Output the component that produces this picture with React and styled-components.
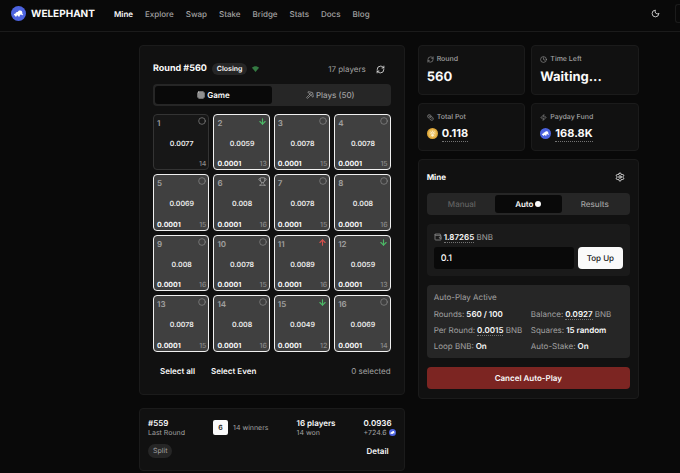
import { useState } from 'react';
import styled, { createGlobalStyle, ThemeProvider } from 'styled-components';
import {
	ArrowDown,
	ArrowUp,
	Circle,
	Clock,
	Coins,
	Grid3x3,
	Moon,
	Pickaxe,
	RefreshCw,
	Settings,
	Trophy,
	Wallet,
	Zap,
} from 'lucide-react';

const theme = {
	page: '#090909',
	card: '#111111',
	line: '#1b1b1b',
	muted: '#262626',
	tile: '#404040',
	white: '#fafafa',
	grey: '#a1a1a1',
	dim: '#737373',
	red: '#7c2522',
	blue: '#4c63df',
};

const GlobalStyle = createGlobalStyle`
	*, *::before, *::after {
		box-sizing: border-box;
	}
	body {
		margin: 0;
		background: #090909;
		color: #fafafa;
		font-family: Inter, 'Liberation Sans', sans-serif;
		font-size: 8px;
		line-height: 12px;
		text-rendering: geometricPrecision;
		overflow: hidden;
	}
	h1, h2, p, dl, dd {
		margin: 0;
	}
	button, input {
		font: inherit;
		color: inherit;
		text-rendering: inherit;
		border: 0;
		padding: 0;
		background: none;
	}
	button {
		cursor: pointer;
	}
	svg {
		flex: none;
		display: block;
	}
`;

// Top bar
const StyledHeader = styled.header`
	display: flex;
	align-items: center;
	height: 32px;
	padding: 0 0 4px 11px;
	border-bottom: 1px solid ${props => props.theme.line};
`;

const Brand = styled.a`
	display: flex;
	align-items: center;
	gap: 5px;
	margin-right: 19px;
	color: ${props => props.theme.white};
	font-size: 10px;
	font-weight: 700;
	text-decoration: none;
`;

const NavList = styled.nav`
	display: flex;
	gap: 12px;
	flex: 1;
`;

const NavLink = styled.a`
	color: ${props => (props.$active ? props.theme.white : props.theme.grey)};
	font-weight: ${props => (props.$active ? 600 : 500)};
	text-decoration: none;
`;

const IconButton = styled.button`
	display: flex;
	align-items: center;
	justify-content: center;
	width: 20px;
	height: 14px;
`;

const MenuButton = styled.button`
	width: 5px;
	height: 19px;
	margin-left: 10px;
	border: 1px solid ${props => props.theme.line};
	border-right: 0;
	border-radius: 3px 0 0 3px;
`;

// Two columns, the board is a bit wider than the side panel
const Layout = styled.main`
	display: grid;
	grid-template-columns: minmax(0, 6fr) minmax(0, 5fr);
	gap: 13px;
	align-items: start;
	padding: 13px 41px 0 139px;
`;

const Column = styled.div`
	display: grid;
	grid-template-columns: minmax(0, 1fr);
	gap: ${props => props.$gap}px;
`;

const Card = styled.section`
	background: ${props => props.theme.card};
	border: 1px solid ${props => props.theme.line};
	border-radius: 4px;
	padding: ${props => props.$pad || '8px'};
`;

const Row = styled.div`
	display: flex;
	align-items: center;
	justify-content: ${props => (props.$between ? 'space-between' : 'flex-start')};
	gap: ${props => props.$gap || 0}px;
`;

const RoundTitle = styled.h1`
	font-size: 9px;
	font-weight: 700;
	line-height: 14px;
`;

const PanelTitle = styled.h2`
	font-size: 8px;
	font-weight: 700;
`;

const Pill = styled.span`
	padding: 0 5px;
	border-radius: 7px;
	background: ${props => props.theme.muted};
	color: ${props => (props.$quiet ? props.theme.grey : props.theme.white)};
	font-size: 7px;
	font-weight: ${props => (props.$quiet ? 400 : 600)};
	line-height: ${props => (props.$quiet ? 14 : 12)}px;
`;

const Muted = styled.span`
	color: ${props => props.theme.grey};
	font-size: ${props => (props.$small ? 7 : 8)}px;
`;

const TabBar = styled.div`
	display: flex;
	padding: 2px;
	border-radius: 4px;
	background: ${props => props.theme.muted};
`;

const Tab = styled.button`
	flex: 1;
	display: flex;
	align-items: center;
	justify-content: center;
	gap: 2px;
	height: 18px;
	border-radius: 3px;
	background: ${props => (props.$active ? props.theme.page : 'transparent')};
	color: ${props => (props.$active ? props.theme.white : props.theme.grey)};
	font-weight: ${props => (props.$active ? 600 : 500)};

	&:disabled {
		color: #626262;
	}
`;

const Dot = styled.span`
	width: 6px;
	height: 6px;
	border-radius: 50%;
	background: ${props => props.theme.white};
`;

// Board
const Board = styled.div`
	display: grid;
	grid-template-columns: repeat(4, 1fr);
	gap: 4px;
`;

const Tile = styled.button`
	display: flex;
	flex-direction: column;
	justify-content: space-between;
	aspect-ratio: 1;
	padding: 2px 2px 0 3px;
	border: 1px solid ${props => (props.$picked ? '#f0f0f0' : '#343434')};
	border-radius: 4px;
	background: ${props => (props.$picked ? props.theme.tile : '#171717')};
	font-size: 7px;
	font-weight: 600;
	line-height: 10px;
`;

const TileRow = styled.span`
	display: flex;
	justify-content: space-between;
	align-items: ${props => (props.$top ? 'flex-start' : 'center')};
`;

const TileNumber = styled.span`
	padding-top: 1px;
	color: ${props => props.theme.grey};
	font-size: 8px;
`;

const TilePrice = styled.span`
	text-align: center;
	color: #ececec;
`;

const TileStake = styled.span`
	font-weight: 700;
`;

const TileCount = styled.span`
	margin-left: auto;
	color: #8c8c8c;
	font-weight: 500;
`;

const CardFooter = styled.div`
	display: flex;
	align-items: center;
	justify-content: space-between;
`;

const TextButton = styled.button`
	padding: 0 7px;
	font-weight: 600;
	line-height: 22px;
`;

// Last round
const Stack = styled.div`
	display: grid;
	line-height: 10px;
`;

const Strong = styled.strong`
	font-weight: 600;
`;

const Winner = styled.span`
	width: 15px;
	border-radius: 2px;
	background: ${props => props.theme.white};
	color: #171717;
	font-size: 7px;
	font-weight: 600;
	line-height: 15px;
	text-align: center;
`;

// Stats
const Stats = styled.div`
	display: grid;
	grid-template-columns: 1fr 1fr;
	gap: 8px 6px;
`;

const StatLabel = styled.div`
	display: flex;
	align-items: center;
	gap: 3px;
	color: ${props => props.theme.grey};
	font-size: 7px;
	font-weight: 500;
	line-height: 10px;
`;

const StatValue = styled.div`
	display: flex;
	align-items: center;
	gap: 4px;
	margin-top: ${props => (props.$icon ? 3 : 4)}px;
	font-size: ${props => (props.$icon ? 11 : 13)}px;
	font-weight: 700;
	line-height: ${props => (props.$icon ? 16 : 18)}px;
`;

const Dashed = styled.span`
	border-bottom: 1px dotted ${props => props.theme.dim};
	color: ${props => props.theme.white};
	font-weight: ${props => props.$weight || 600};
`;

// Mine panel
const Box = styled.div`
	padding: ${props => props.$pad};
	border-radius: 4px;
	background: ${props => (props.$light ? props.theme.muted : '#1a1a1a')};
`;

const TopUp = styled.div`
	display: flex;
	gap: 4px;
	margin-top: 4px;
`;

const AmountInput = styled.input`
	flex: 1;
	min-width: 0;
	height: 22px;
	padding: 0 7px;
	border-radius: 3px;
	background: ${props => props.theme.page};
	font-size: 9px;
	font-weight: 500;
`;

const WideButton = styled.button`
	height: 22px;
	padding: 0 9px;
	border-radius: 4px;
	background: ${props => (props.$danger ? props.theme.red : props.theme.white)};
	color: ${props => (props.$danger ? props.theme.white : '#171717')};
	font-weight: ${props => (props.$danger ? 600 : 500)};
`;

const Facts = styled.dl`
	display: grid;
	grid-template-columns: 1fr 1fr;
	gap: 4px 5px;
	margin-top: 5px;
`;

const Fact = styled.div`
	display: flex;
	gap: 2px;
	color: ${props => props.theme.grey};
	white-space: nowrap;
`;

const Value = styled(Strong)`
	color: ${props => props.theme.white};
`;

const Elephant = ({ size }) => (
	<svg width={size} height={size} viewBox="0 0 32 32" aria-hidden="true">
		<circle cx="16" cy="16" r="16" fill={theme.blue} />
		<path
			fill="#fff"
			d="M6 20.500c-.3-2.900 1.200-4.700 3.700-4.700.5-2.300 2.300-3.400 4.600-3.100.9-2.700 3.300-3.900 5.700-3 2.900.2 4.300 2.200 4.100 4.900-.1 2.100.5 3.500 2.300 4.200-1.400 1.800-4.300 1.200-5-1-.6.9-1.300 1.300-2.400 1.300l-.4 3.400h-3.200l-.6-2.200h-2.300l-.6 2.200H8.700l-.4-2.500Z"
		/>
	</svg>
);

const Coin = ({ size }) => (
	<svg width={size} height={size} viewBox="0 0 32 32" aria-hidden="true">
		<circle cx="16" cy="16" r="16" fill="#e0a83a" />
		<circle cx="16" cy="16" r="11.500" fill="#edc160" />
		<path
			d="M10 11l6 3.500 6-3.500M10 15.500l6 3.500 6-3.500M16 8v3M16 19v5M11.500 20.500l4.500 2.600 4.500-2.600"
			stroke="#fff7df"
			strokeWidth="2.400"
			fill="none"
		/>
	</svg>
);

const Signal = () => (
	<svg width="7" height="6" viewBox="0 0 14 12" aria-hidden="true">
		<path d="M0 3.500C4-.5 10-.5 14 3.500L7 12Z" fill="#347a42" />
	</svg>
);

const marks = {
	same: <Circle size={8} color="#8c8c8c" strokeWidth={2} />,
	down: <ArrowDown size={9} color="#4cb866" strokeWidth={3} />,
	up: <ArrowUp size={9} color="#d5504c" strokeWidth={3} />,
	best: <Trophy size={9} color="#a1a1a1" strokeWidth={2} />,
};

// price, players on the square, mark
const tiles = [
	['0.0077', 14, 'same'],
	['0.0059', 13, 'down'],
	['0.0078', 15, 'same'],
	['0.0078', 15, 'same'],
	['0.0069', 15, 'same'],
	['0.008', 16, 'best'],
	['0.0078', 15, 'same'],
	['0.008', 16, 'same'],
	['0.008', 16, 'same'],
	['0.0078', 15, 'same'],
	['0.0089', 16, 'up'],
	['0.0059', 13, 'down'],
	['0.0078', 15, 'same'],
	['0.008', 16, 'same'],
	['0.0049', 12, 'down'],
	['0.0069', 14, 'same'],
];

const links = ['Mine', 'Explore', 'Swap', 'Stake', 'Bridge', 'Stats', 'Docs', 'Blog'];

const Header = () => (
	<StyledHeader>
		<Brand href="#">
			<Elephant size={15} />
			WELEPHANT
		</Brand>
		<NavList>
			{links.map(link => (
				<NavLink key={link} href={`#${link.toLowerCase()}`} $active={link === 'Mine'}>
					{link}
				</NavLink>
			))}
		</NavList>
		<IconButton aria-label="Toggle theme">
			<Moon size={9} />
		</IconButton>
		<MenuButton aria-label="Open menu" />
	</StyledHeader>
);

const Game = () => (
	<Card $pad="16px 13px 12px">
		<Column $gap={8}>
			<Row $between>
				<Row $gap={5}>
					<RoundTitle>Round #560</RoundTitle>
					<Pill>Closing</Pill>
					<Signal />
				</Row>
				<Row $gap={5}>
					<Muted>17 players</Muted>
					<IconButton aria-label="Refresh">
						<RefreshCw size={9} />
					</IconButton>
				</Row>
			</Row>
			<TabBar>
				<Tab $active>
					<Grid3x3 size={8} /> Game
				</Tab>
				<Tab>
					<Pickaxe size={8} /> Plays (50)
				</Tab>
			</TabBar>
			<Board>
				{tiles.map(([price, count, mark], i) => (
					<Tile key={i} $picked={i > 0}>
						<TileRow $top>
							<TileNumber>{i + 1}</TileNumber>
							{marks[mark]}
						</TileRow>
						<TilePrice>{price}</TilePrice>
						<TileRow>
							{i > 0 && <TileStake>0.0001</TileStake>}
							<TileCount>{count}</TileCount>
						</TileRow>
					</Tile>
				))}
			</Board>
			<CardFooter>
				<Row $gap={2}>
					<TextButton>Select all</TextButton>
					<TextButton>Select Even</TextButton>
				</Row>
				<Muted>0 selected</Muted>
			</CardFooter>
		</Column>
	</Card>
);

const LastRound = () => (
	<Card $pad="9px 8px 8px">
		<Column $gap={2}>
			<Row $between>
				<Stack>
					<Strong>#559</Strong>
					<Muted $small>Last Round</Muted>
				</Stack>
				<Row $gap={5}>
					<Winner>6</Winner>
					<Muted $small>14 winners</Muted>
				</Row>
				<Stack>
					<Strong>16 players</Strong>
					<Muted $small>14 won</Muted>
				</Stack>
				<Stack>
					<Strong>0.0936</Strong>
					<Row $gap={2}>
						<Muted $small>+724.6</Muted>
						<Elephant size={7} />
					</Row>
				</Stack>
			</Row>
			<CardFooter>
				<Pill $quiet>Split</Pill>
				<TextButton>Detail</TextButton>
			</CardFooter>
		</Column>
	</Card>
);

const Stat = ({ icon: Icon, label, logo, children }) => (
	<Card>
		<StatLabel>
			<Icon size={7} /> {label}
		</StatLabel>
		<StatValue $icon={Boolean(logo)}>
			{logo}
			{logo ? <Dashed $weight={700}>{children}</Dashed> : children}
		</StatValue>
	</Card>
);

const MinePanel = () => {
	const [amount, setAmount] = useState('0.1');

	return (
		<Card $pad="10px 8px 9px">
			<Column $gap={9}>
				<Row $between>
					<PanelTitle>Mine</PanelTitle>
					<IconButton aria-label="Settings">
						<Settings size={10} />
					</IconButton>
				</Row>
				<TabBar>
					<Tab disabled>Manual</Tab>
					<Tab $active>
						Auto <Dot />
					</Tab>
					<Tab>Results</Tab>
				</TabBar>
				<Box $pad="7px">
					<Row $gap={2}>
						<Wallet size={8} color={theme.grey} />
						<label htmlFor="amount">
							<Dashed>1.87265</Dashed> <Muted>BNB</Muted>
						</label>
					</Row>
					<TopUp>
						<AmountInput id="amount" value={amount} onChange={e => setAmount(e.target.value)} />
						<WideButton>Top Up</WideButton>
					</TopUp>
				</Box>
				<Box $light $pad="6px 7px">
					<Muted>Auto-Play Active</Muted>
					<Facts>
						<Fact>
							<dt>Rounds:</dt>
							<dd><Value>560 / 100</Value></dd>
						</Fact>
						<Fact>
							<dt>Balance:</dt>
							<dd><Dashed>0.0927</Dashed> BNB</dd>
						</Fact>
						<Fact>
							<dt>Per Round:</dt>
							<dd><Dashed>0.0015</Dashed> BNB</dd>
						</Fact>
						<Fact>
							<dt>Squares:</dt>
							<dd><Value>15 random</Value></dd>
						</Fact>
						<Fact>
							<dt>Loop BNB:</dt>
							<dd><Value>On</Value></dd>
						</Fact>
						<Fact>
							<dt>Auto-Stake:</dt>
							<dd><Value>On</Value></dd>
						</Fact>
					</Facts>
				</Box>
				<WideButton $danger>Cancel Auto-Play</WideButton>
			</Column>
		</Card>
	);
};

const App = () => (
	<ThemeProvider theme={theme}>
		<GlobalStyle />
		<Header />
		<Layout>
			<Column $gap={13}>
				<Game />
				<LastRound />
			</Column>
			<Column $gap={8}>
				<Stats>
					<Stat icon={RefreshCw} label="Round">560</Stat>
					<Stat icon={Clock} label="Time Left">Waiting...</Stat>
					<Stat icon={Coins} label="Total Pot" logo={<Coin size={11} />}>0.118</Stat>
					<Stat icon={Zap} label="Payday Fund" logo={<Elephant size={11} />}>168.8K</Stat>
				</Stats>
				<MinePanel />
			</Column>
		</Layout>
	</ThemeProvider>
);

export default App;
